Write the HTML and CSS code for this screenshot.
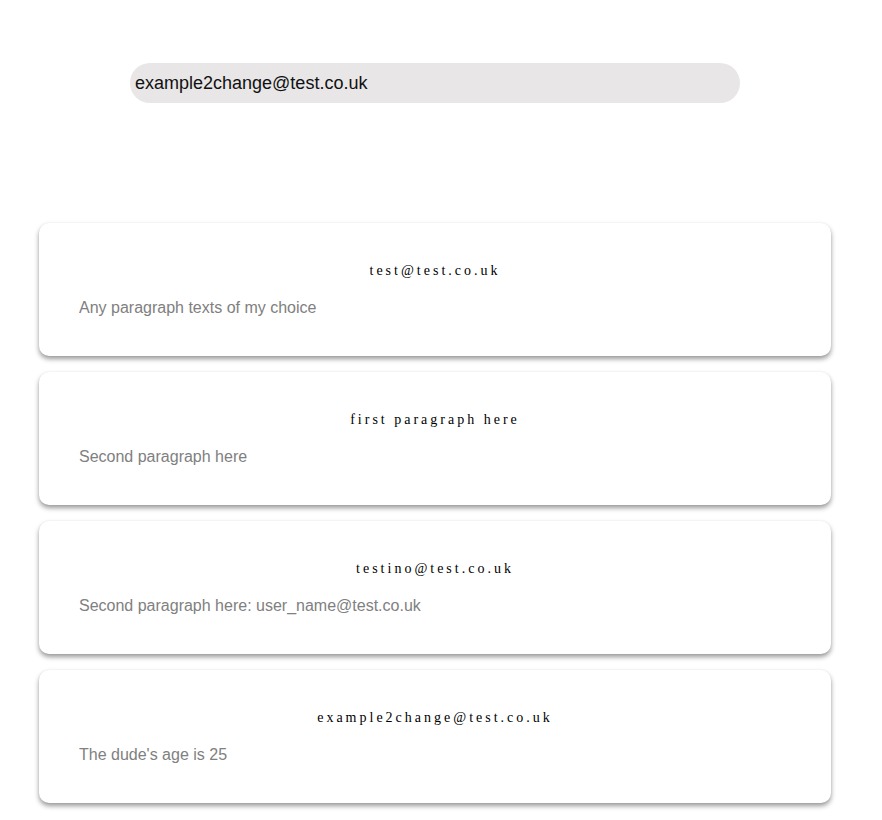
FILE: index.html
```html
<!DOCTYPE html>
<html>
<head>
<meta charset="utf-8">
<link rel="stylesheet" href="styles.css">
</head>
<body>
<div class="search">
  <input class="search-input" type="text" value="example2change@test.co.uk">
</div>
<div class="cards">
  <div class="card">
    <h2 class="card-title">test@test.co.uk</h2>
    <p class="card-text">Any paragraph texts of my choice</p>
  </div>
  <div class="card">
    <h2 class="card-title">first paragraph here</h2>
    <p class="card-text">Second paragraph here</p>
  </div>
  <div class="card">
    <h2 class="card-title">testino@test.co.uk</h2>
    <p class="card-text">Second paragraph here: user_name@test.co.uk</p>
  </div>
  <div class="card">
    <h2 class="card-title">example2change@test.co.uk</h2>
    <p class="card-text">The dude's age is 25</p>
  </div>
</div>
</body>
</html>
```
FILE: styles.css
```css
html, body {
  margin: 0;
  padding: 0;
  background: #ffffff;
}
body {
  font-family: "Liberation Sans", Arial, sans-serif;
}
.search {
  padding: 63px 0 0 130px;
}
.search-input {
  box-sizing: border-box;
  display: block;
  width: 610px;
  height: 40px;
  border: none;
  outline: none;
  border-radius: 20px;
  background: #e8e6e7;
  padding: 0 5px;
  font-family: "Liberation Sans", Arial, sans-serif;
  font-size: 18px;
  color: #111;
}
.cards {
  display: flex;
  flex-direction: column;
  gap: 16px;
  padding: 120px 0 16px 39px;
}
.card {
  box-sizing: border-box;
  width: 792px;
  height: 133px;
  background: #fff;
  border-radius: 10px;
  box-shadow: 0 3px 5px rgba(0, 0, 0, 0.4), 0 0 2px rgba(0, 0, 0, 0.06);
  padding: 40px 40px 0 40px;
}
.card-title {
  margin: 0;
  font-family: "Liberation Serif", "Times New Roman", serif;
  font-weight: normal;
  font-size: 14px;
  line-height: 16px;
  letter-spacing: 3px;
  text-align: center;
  color: #000;
}
.card-text {
  margin: 20px 0 0 0;
  font-size: 16px;
  line-height: 18px;
  color: #808080;
}
```
